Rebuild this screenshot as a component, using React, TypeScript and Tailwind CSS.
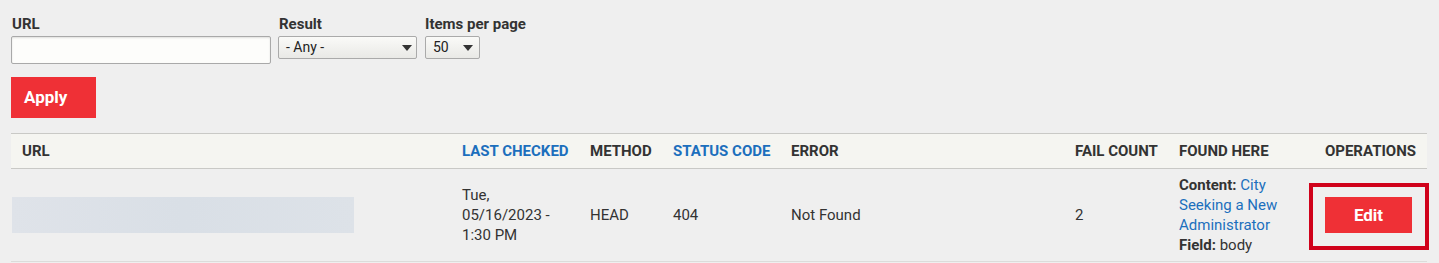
import React from "react";

function Caret() {
  return (
    <svg width="10" height="6" viewBox="0 0 10 6" className="shrink-0">
      <path d="M0 0 L10 0 L5 6 Z" fill="#333" />
    </svg>
  );
}

export default function App() {
  const font = { fontFamily: "Roboto, 'Liberation Sans', sans-serif" };
  return (
    <div className="min-h-[263px] w-[1439px] bg-[#efefef] text-[#333] pt-[14px]" style={font}>
      {/* Filters */}
      <div className="flex items-start pl-[11px]">
        <div className="flex flex-col w-[260px] mr-[7px]">
          <label className="text-[15px] font-bold leading-[21px] pl-[1px] h-[22px]">URL</label>
          <div className="h-[28px] w-[260px] border border-[#a9a9a9] bg-[#fdfdfb] rounded-[2px] shadow-[inset_0_1px_2px_rgba(0,0,0,0.12)]" />
        </div>
        <div className="flex flex-col mr-[8px]">
          <label className="text-[15px] font-bold leading-[21px] pl-[1px] h-[22px]">Result</label>
          <div className="h-[23px] w-[139px] border border-[#aaa] rounded-[2px] bg-gradient-to-b from-[#fafaf8] to-[#e9e9e6] flex items-center justify-between pl-[7px] pr-[4px] text-[14px] text-[#222]">
            <span>- Any -</span>
            <Caret />
          </div>
        </div>
        <div className="flex flex-col">
          <label className="text-[15px] font-bold leading-[21px] h-[22px]">Items per page</label>
          <div className="h-[23px] w-[55px] border border-[#aaa] rounded-[2px] bg-gradient-to-b from-[#fafaf8] to-[#e9e9e6] flex items-center justify-between pl-[7px] pr-[6px] text-[14px] text-[#222]">
            <span>50</span>
            <Caret />
          </div>
        </div>
      </div>

      <div className="pl-[11px] mt-[13px]">
        <button className="h-[41px] w-[85px] bg-[#ef3036] text-white font-bold text-[17px] text-left pl-[13px]">
          Apply
        </button>
      </div>

      {/* Table */}
      <div className="ml-[11px] mt-[15px] w-[1416px] text-[15px]">
        <div className="grid grid-cols-[440px_128px_83px_118px_284px_104px_147px_112px] bg-[#f5f5f1] border-t border-b border-[#c9c9c6] h-[36px] items-center font-bold uppercase">
          <div className="pl-[11px]">URL</div>
          <div className="pl-[11px] text-[#1c6fbd]">Last Checked</div>
          <div className="pl-[11px]">Method</div>
          <div className="pl-[11px] text-[#1c6fbd]">Status Code</div>
          <div className="pl-[11px]">Error</div>
          <div className="pl-[11px]">Fail Count</div>
          <div className="pl-[11px]">Found Here</div>
          <div className="pr-[11px] text-right">Operations</div>
        </div>
        <div className="grid grid-cols-[440px_128px_83px_118px_284px_104px_147px_112px] border-b border-[#dcdcda] h-[93px] items-center leading-[20px]">
          <div className="pl-[1px]">
            <div className="h-[36px] w-[342px] bg-gradient-to-r from-[#dfe3e9] via-[#d9dfe6] to-[#dde2e8] blur-[0.5px]" />
          </div>
          <div className="pl-[11px]">
            Tue,
            <br />
            05/16/2023 -
            <br />
            1:30 PM
          </div>
          <div className="pl-[11px]">HEAD</div>
          <div className="pl-[11px]">404</div>
          <div className="pl-[11px]">Not Found</div>
          <div className="pl-[11px]">2</div>
          <div className="pl-[11px] pr-[6px] flex flex-col">
            <div>
              <span className="font-bold">Content:</span> <span className="text-[#1c6fbd]">City</span>
            </div>
            <div className="text-[#1c6fbd]">Seeking a New</div>
            <div className="text-[#1c6fbd]">Administrator</div>
            <div>
              <span className="font-bold">Field:</span> body
            </div>
          </div>
          <div className="pl-[10px] flex">
            <div className="relative">
              <button className="h-[36px] w-[87px] bg-[#ef3036] text-white font-bold text-[17px]">Edit</button>
              <div className="absolute -left-[16px] -right-[17px] -top-[14px] -bottom-[17px] border-4 border-[#d0021b] pointer-events-none" />
            </div>
          </div>
        </div>
      </div>
    </div>
  );
}
